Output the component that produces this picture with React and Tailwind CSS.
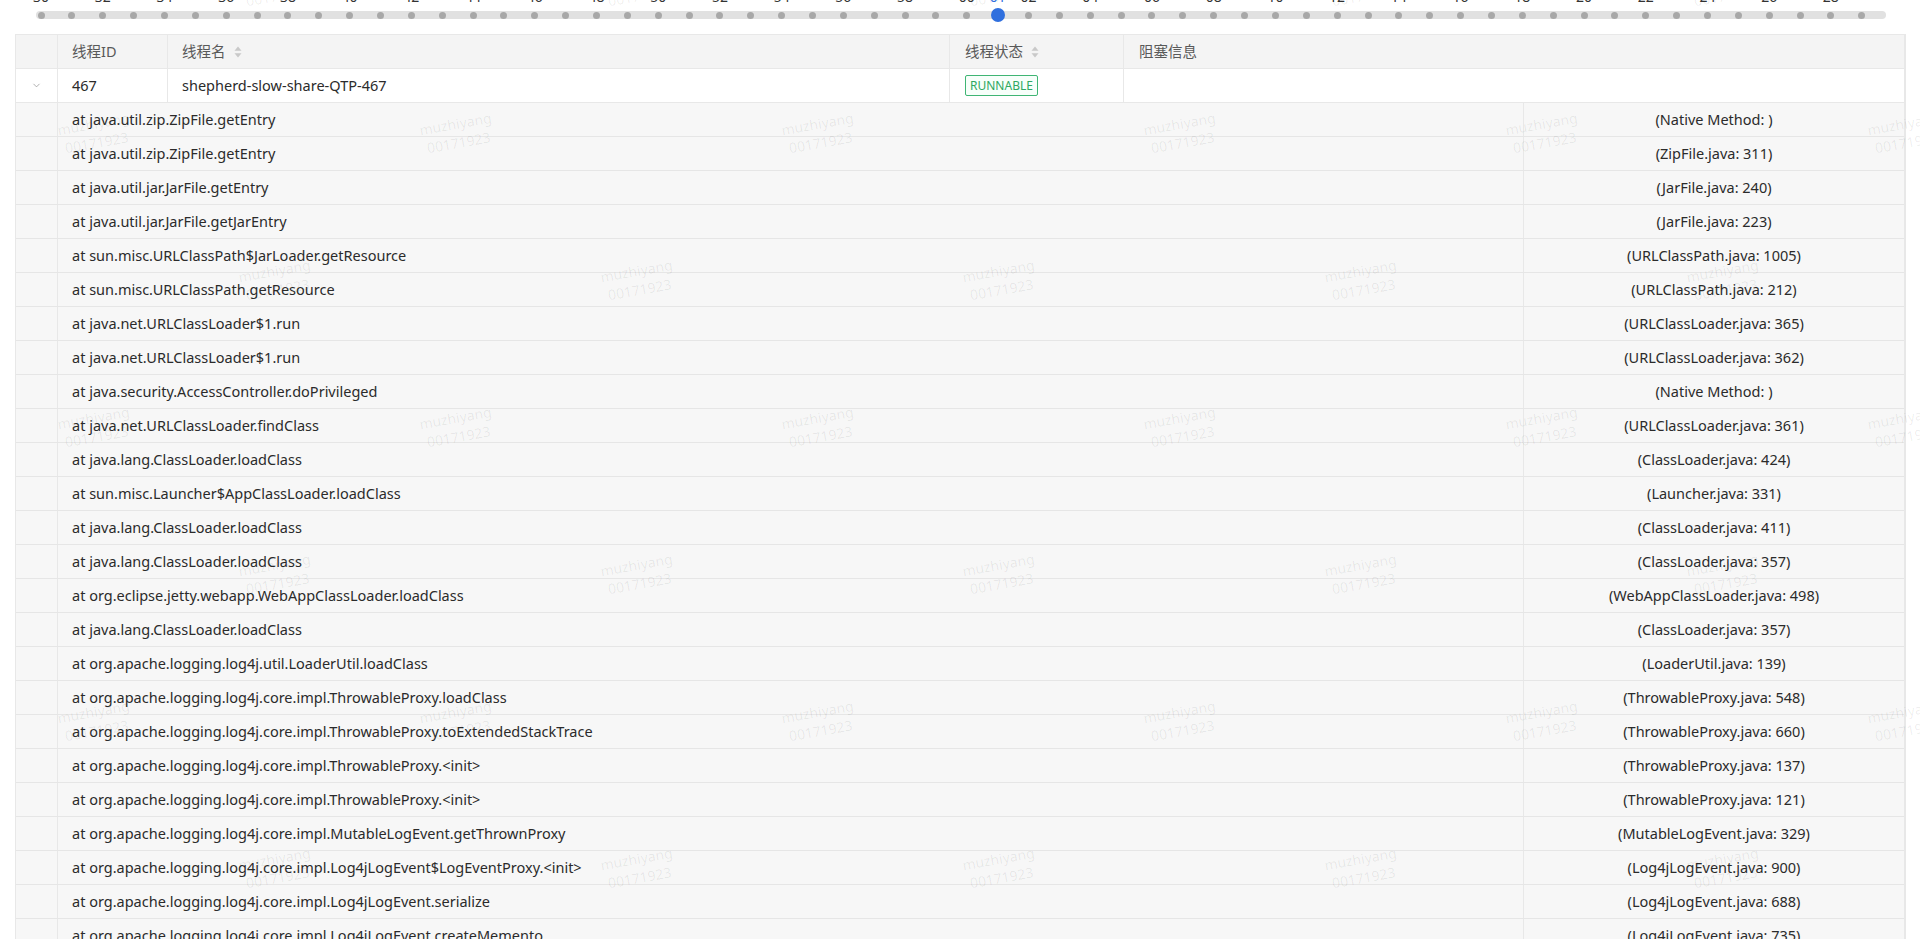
import React from 'react';
import { ChevronDown } from 'lucide-react';

const frames = [
  ['at java.util.zip.ZipFile.getEntry', '(Native Method: )'],
  ['at java.util.zip.ZipFile.getEntry', '(ZipFile.java: 311)'],
  ['at java.util.jar.JarFile.getEntry', '(JarFile.java: 240)'],
  ['at java.util.jar.JarFile.getJarEntry', '(JarFile.java: 223)'],
  ['at sun.misc.URLClassPath$JarLoader.getResource', '(URLClassPath.java: 1005)'],
  ['at sun.misc.URLClassPath.getResource', '(URLClassPath.java: 212)'],
  ['at java.net.URLClassLoader$1.run', '(URLClassLoader.java: 365)'],
  ['at java.net.URLClassLoader$1.run', '(URLClassLoader.java: 362)'],
  ['at java.security.AccessController.doPrivileged', '(Native Method: )'],
  ['at java.net.URLClassLoader.findClass', '(URLClassLoader.java: 361)'],
  ['at java.lang.ClassLoader.loadClass', '(ClassLoader.java: 424)'],
  ['at sun.misc.Launcher$AppClassLoader.loadClass', '(Launcher.java: 331)'],
  ['at java.lang.ClassLoader.loadClass', '(ClassLoader.java: 411)'],
  ['at java.lang.ClassLoader.loadClass', '(ClassLoader.java: 357)'],
  ['at org.eclipse.jetty.webapp.WebAppClassLoader.loadClass', '(WebAppClassLoader.java: 498)'],
  ['at java.lang.ClassLoader.loadClass', '(ClassLoader.java: 357)'],
  ['at org.apache.logging.log4j.util.LoaderUtil.loadClass', '(LoaderUtil.java: 139)'],
  ['at org.apache.logging.log4j.core.impl.ThrowableProxy.loadClass', '(ThrowableProxy.java: 548)'],
  ['at org.apache.logging.log4j.core.impl.ThrowableProxy.toExtendedStackTrace', '(ThrowableProxy.java: 660)'],
  ['at org.apache.logging.log4j.core.impl.ThrowableProxy.<init>', '(ThrowableProxy.java: 137)'],
  ['at org.apache.logging.log4j.core.impl.ThrowableProxy.<init>', '(ThrowableProxy.java: 121)'],
  ['at org.apache.logging.log4j.core.impl.MutableLogEvent.getThrownProxy', '(MutableLogEvent.java: 329)'],
  ['at org.apache.logging.log4j.core.impl.Log4jLogEvent$LogEventProxy.<init>', '(Log4jLogEvent.java: 900)'],
  ['at org.apache.logging.log4j.core.impl.Log4jLogEvent.serialize', '(Log4jLogEvent.java: 688)'],
  ['at org.apache.logging.log4j.core.impl.Log4jLogEvent.createMemento', '(Log4jLogEvent.java: 735)'],
];

const DOTS = 60;
const ACTIVE = 31;

function pad(n) {
  return String(n).padStart(2, '0');
}

// watermark grid, staggered every other row
function watermarkSpots() {
  const spots = [];
  for (let r = -1; r < 7; r++) {
    const odd = Math.abs(r) % 2 === 1;
    const y = 133 + r * 147;
    const x0 = odd ? -86 : 95;
    for (let x = x0; x < 2000; x += 362) spots.push({ x, y });
  }
  return spots;
}

function SortIcon() {
  return (
    <svg width="8" height="12" viewBox="0 0 8 12" className="ml-[8px]">
      <path d="M4 0.5 L7.5 4.8 L0.5 4.8 Z" fill="#c9c9c9" />
      <path d="M4 11.5 L7.5 7.2 L0.5 7.2 Z" fill="#c9c9c9" />
    </svg>
  );
}

function TimeSlider() {
  const marks = Array.from({ length: DOTS }, (_, i) => i);
  return (
    <div className="h-[34px] flex flex-col">
      <div className="-mt-[13px] ml-[25.6px] w-[1851.6px] h-[20px] grid grid-cols-[repeat(60,minmax(0,1fr))] text-[14px] leading-[20px] text-[#333]">
        {marks.map((i) => (
          <div key={i} className="flex justify-center whitespace-nowrap">
            {i === ACTIVE ? (
              <span className="text-[#2f6fde]">{pad((30 + i) % 60)}</span>
            ) : i % 2 === 0 ? (
              pad((30 + i) % 60)
            ) : null}
          </div>
        ))}
      </div>
      <div className="mt-[4px] ml-[36px] w-[1850px] h-[8px] rounded-full bg-[#e1e1e1] flex items-center">
        <div className="-ml-[10.4px] w-[1851.6px] grid grid-cols-[repeat(60,minmax(0,1fr))] items-center">
          {marks.map((i) => (
            <div key={i} className="flex justify-center">
              {i === ACTIVE ? (
                <span className="w-[14px] h-[14px] rounded-full bg-[#2f6fde]" />
              ) : (
                <span className="w-[7px] h-[7px] rounded-full bg-[#a8a8a8]" />
              )}
            </div>
          ))}
        </div>
      </div>
    </div>
  );
}

const App = () => {
  return (
    <div className="relative h-[939px] w-[1920px] overflow-hidden bg-white font-['Noto_Sans','Noto_Sans_CJK_SC',sans-serif] text-[14.5px] text-[#2b2b2b]">
      <TimeSlider />

      <div className="ml-[15px] w-[1891px] border-l border-t border-r-2 border-[#e8e8e8]">
        {/* header */}
        <div className="flex h-[34px] items-center bg-[#f4f4f4] border-b border-[#e8e8e8] text-[#595959]">
          <div className="w-[42px] h-full border-r border-[#e8e8e8]" />
          <div className="w-[110px] h-full flex items-center px-[14px] border-r border-[#e8e8e8]">线程ID</div>
          <div className="w-[782px] h-full flex items-center px-[14px] border-r border-[#e8e8e8]">
            线程名<SortIcon />
          </div>
          <div className="w-[174px] h-full flex items-center px-[15px] border-r border-[#e8e8e8]">
            线程状态<SortIcon />
          </div>
          <div className="flex-1 h-full flex items-center px-[15px]">阻塞信息</div>
        </div>

        {/* thread row */}
        <div className="flex h-[34px] items-center bg-white border-b border-[#e8e8e8]">
          <div className="w-[42px] h-full flex items-center justify-center border-r border-[#e8e8e8]">
            <ChevronDown size={11} strokeWidth={1.5} color="#8c8c8c" />
          </div>
          <div className="w-[110px] h-full flex items-center px-[14px] border-r border-[#e8e8e8]">467</div>
          <div className="w-[782px] h-full flex items-center px-[14px] border-r border-[#e8e8e8]">shepherd-slow-share-QTP-467</div>
          <div className="w-[174px] h-full flex items-center px-[15px] border-r border-[#e8e8e8]">
            <span className="h-[21px] px-[4px] flex items-center rounded-[2px] border border-[#3fb574] bg-[#f7fffa] text-[12px] text-[#2ea862]">
              RUNNABLE
            </span>
          </div>
          <div className="flex-1 h-full" />
        </div>

        {/* stack frames */}
        {frames.map(([method, loc], idx) => (
          <div key={idx} className="flex h-[34px] items-center bg-[#f7f7f7] border-b border-[#e6e6e6]">
            <div className="w-[42px] h-full border-r border-[#e8e8e8]" />
            <div className="w-[1465px] h-full flex items-center px-[14px] whitespace-nowrap">{method}</div>
            <div className="flex-1 h-full flex items-center justify-center border-l border-[#e8e8e8] whitespace-nowrap">{loc}</div>
          </div>
        ))}
      </div>

      {/* watermark overlay */}
      <div className="absolute inset-0 pointer-events-none select-none">
        {watermarkSpots().map((s, i) => (
          <div
            key={i}
            className="absolute -translate-x-1/2 -translate-y-1/2 -rotate-[10deg] text-[14px] leading-[19px] text-[rgba(0,0,0,0.07)] whitespace-nowrap text-center"
            style={{ left: s.x, top: s.y }}
          >
            <div>muzhiyang</div>
            <div>00171923</div>
          </div>
        ))}
      </div>
    </div>
  );
};

export default App;
